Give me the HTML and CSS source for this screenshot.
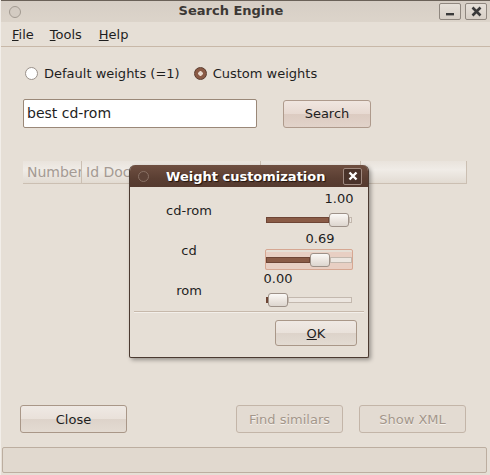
FILE: index.html
```html
<!DOCTYPE html>
<html>
<head>
<meta charset="utf-8">
<link rel="stylesheet" href="styles.css">
</head>
<body>
<div class="window">
  <div class="titlebar">
    <span class="tb-circle"></span>
    <span class="tb-title">Search Engine</span>
    <div class="tb-buttons">
      <span class="tb-btn"><svg width="10" height="10" viewBox="0 0 10 10"><rect x="1" y="6" width="8" height="2.4" fill="#3a3a3a"/></svg></span>
      <span class="tb-btn"><svg width="11" height="11" viewBox="0 0 11 11"><path d="M1.5 1.5 L9.5 9.5 M9.5 1.5 L1.5 9.5" stroke="#3a3a3a" stroke-width="2.6"/></svg></span>
    </div>
  </div>
  <div class="menubar">
    <span class="menu-item"><u>F</u>ile</span>
    <span class="menu-item"><u>T</u>ools</span>
    <span class="menu-item"><u>H</u>elp</span>
  </div>
  <div class="content">
    <div class="radios">
      <label class="radio"><span class="radio-dot"></span>Default weights (=1)</label>
      <label class="radio"><span class="radio-dot checked"></span>Custom weights</label>
    </div>
    <div class="search-row">
      <div class="entry">best cd-rom</div>
      <button class="btn search-btn">Search</button>
    </div>
    <div class="table-header">
      <span class="col col-num">Number</span>
      <span class="col col-id">Id Document</span>
      <span class="col col-w"></span>
      <span class="col col-rest"></span>
    </div>
    <div class="spacer"></div>
    <div class="bottom-buttons">
      <button class="btn close-btn">Close</button>
      <div class="right-buttons">
        <button class="btn disabled">Find similars</button>
        <button class="btn disabled">Show XML</button>
      </div>
    </div>
  </div>
  <div class="statusbar"></div>

  <div class="dialog">
    <div class="dlg-title">
      <span class="dlg-circle"></span>
      <span class="dlg-title-text">Weight customization</span>
      <span class="dlg-close"><svg width="10" height="10" viewBox="0 0 10 10"><path d="M1.5 1.5 L8.5 8.5 M8.5 1.5 L1.5 8.5" stroke="#ffffff" stroke-width="2.4"/></svg></span>
    </div>
    <div class="dlg-body">
      <div class="weight-row">
        <div class="w-label">cd-rom</div>
        <div class="slider">
          <div class="slider-fill" style="width:63px"></div>
          <div class="handle-col"><span class="value">1.00</span><span class="handle"></span></div>
          <div class="slider-rest"></div>
        </div>
      </div>
      <div class="weight-row">
        <div class="w-label">cd</div>
        <div class="slider focused">
          <div class="slider-fill" style="width:44px"></div>
          <div class="handle-col"><span class="value">0.69</span><span class="handle"></span></div>
          <div class="slider-rest"></div>
        </div>
      </div>
      <div class="weight-row">
        <div class="w-label">rom</div>
        <div class="slider">
          <div class="slider-fill" style="width:1px"></div>
          <div class="handle-col"><span class="value">0.00</span><span class="handle"></span></div>
          <div class="slider-rest"></div>
        </div>
      </div>
      <div class="separator"></div>
      <div class="dlg-actions">
        <button class="btn ok-btn"><u>O</u>K</button>
      </div>
    </div>
  </div>
</div>
</body>
</html>
```

FILE: styles.css
```css
* { box-sizing: border-box; }
html, body { margin: 0; padding: 0; }
body {
  width: 490px;
  height: 475px;
  overflow: hidden;
  font-family: "DejaVu Sans", "Liberation Sans", sans-serif;
  font-size: 13px;
  color: #1e1e1e;
  background: #e6dfd6;
}
.window {
  position: relative;
  width: 490px;
  height: 475px;
  display: flex;
  flex-direction: column;
  background: #e6dfd6;
  border-left: 1px solid #f2eee9;
}
.titlebar {
  height: 22px;
  flex: none;
  display: flex;
  align-items: center;
  position: relative;
  border-top: 1px solid #6a6158;
  background: linear-gradient(#d6cec5, #dcd4ca);
  padding: 0 3px 0 8px;
}
.tb-circle {
  width: 12px;
  height: 12px;
  border-radius: 50%;
  border: 1px solid #a29a91;
  background: #d3cbc2;
}
.tb-title {
  flex: 1;
  text-align: center;
  font-weight: bold;
  color: #3c3835;
  font-size: 13px;
  padding-left: 2px;
  margin-top: -2px;
}
.tb-buttons { display: flex; gap: 4px; }
.tb-btn {
  width: 22px;
  height: 17px;
  border: 1px solid #8f877f;
  border-radius: 2px;
  background: linear-gradient(#e6e0d9, #d7cfc6);
  display: flex;
  align-items: center;
  justify-content: center;
}
.menubar {
  height: 25px;
  flex: none;
  display: flex;
  align-items: center;
  padding-left: 11px;
  border-bottom: 1px solid #c8b8a8;
  background: #e6dfd6;
}
.menu-item { margin-right: 16px; }
.menu-item:nth-child(2) { margin-right: 17px; }
.content {
  flex: 1;
  display: flex;
  flex-direction: column;
  padding: 17px 24px 12px 18px;
}
.radios {
  display: flex;
  align-items: center;
  gap: 14px;
  height: 18px;
  padding-left: 6px;
}
.radio { display: flex; align-items: center; gap: 6px; }
.radio-dot {
  width: 13px;
  height: 13px;
  border-radius: 50%;
  border: 1px solid #9a918a;
  background: #ffffff;
}
.radio-dot.checked {
  border-color: #5a3b2d;
  background: radial-gradient(circle, #e8d8cc 0 2px, #8a5a45 2.5px);
}
.search-row {
  display: flex;
  align-items: center;
  margin-top: 17px;
  gap: 26px;
  padding-left: 4px;
}
.entry {
  width: 234px;
  height: 29px;
  background: #ffffff;
  border: 1px solid #9a8878;
  border-radius: 2px;
  padding: 5px 3px;
  font-size: 14px;
}
.btn {
  font-family: "DejaVu Sans", "Liberation Sans", sans-serif;
  font-size: 13px;
  color: #1e1e1e;
  border: 1px solid #a99788;
  border-radius: 3px;
  background: linear-gradient(#efe9e4 0%, #e9e1da 50%, #ddd3ca 52%, #e3dbd2 100%);
  padding: 0;
}
.search-btn {
  width: 88px;
  height: 28px;
  background: linear-gradient(#f0e6e0 0%, #e7d9d1 50%, #dccbc1 52%, #e2d3ca 100%);
  border-color: #ae9a8c;
}
.table-header {
  margin-top: 33px;
  display: flex;
  height: 23px;
  margin-left: 4px;
  margin-right: -1px;
  background: linear-gradient(#e9e3dc, #f0ece7 40%, #e2dbd2);
  border-bottom: 1px solid #cbbfb2;
  border-right: 1px solid #cbbfb2;
  color: #a49a93;
  font-size: 14px;
}
.col {
  display: flex;
  align-items: center;
  padding-left: 4px;
  border-right: 1px solid #cbbfb2;
  white-space: nowrap;
  overflow: hidden;
}
.col-num { width: 59px; }
.col-id { width: 179px; }
.col-w { width: 100px; }
.col-rest { flex: 1; border-right: none; }
.spacer { flex: 1; }
.bottom-buttons {
  display: flex;
  justify-content: space-between;
  align-items: center;
  padding-left: 1px;
  margin-bottom: 2px;
}
.bottom-buttons .btn { width: 107px; height: 28px; }
.right-buttons { display: flex; gap: 16px; }
.btn.disabled {
  color: #a3968a;
  text-shadow: 0 1px 0 #f6f2ee;
  background: #e3dbd2;
  border-color: #c3b5a8;
}
.statusbar {
  flex: none;
  height: 26px;
  margin: 0 3px 2px 1px;
  border: 1px solid #bcaea0;
  border-radius: 2px;
  background: #e1d9cf;
}

/* dialog (floating window) */
.dialog {
  position: absolute;
  left: 128px;
  top: 165px;
  width: 240px;
  height: 193px;
  border: 1px solid #4b3a31;
  border-top: none;
  border-radius: 6px 6px 2px 2px;
  background: #e6dfd6;
  box-shadow: 2px 2px 4px rgba(0,0,0,0.35);
  display: flex;
  flex-direction: column;
  overflow: hidden;
}
.dlg-title {
  height: 22px;
  flex: none;
  display: flex;
  align-items: center;
  padding: 0 6px 0 8px;
  background: linear-gradient(#6f4f41, #5b3f33 60%, #553a2f);
}
.dlg-circle {
  width: 11px;
  height: 11px;
  border-radius: 50%;
  border: 1px solid #8a7266;
  background: #5d4237;
}
.dlg-title-text {
  flex: 1;
  color: #ffffff;
  font-weight: bold;
  font-size: 13px;
  padding-left: 17px;
  text-shadow: 1px 1px 1px #1e120c;
}
.dlg-close {
  width: 19px;
  height: 17px;
  border: 1px solid #a08a80;
  border-radius: 2px;
  background: #4a332a;
  display: flex;
  align-items: center;
  justify-content: center;
}
.dlg-body {
  flex: 1;
  display: flex;
  flex-direction: column;
  padding-top: 4px;
}
.weight-row {
  display: grid;
  grid-template-columns: 118px 88px;
  column-gap: 17px;
  height: 40px;
  align-items: stretch;
}
.w-label {
  display: flex;
  align-items: center;
  justify-content: center;
  padding-bottom: 1px;
}
.slider {
  display: flex;
  align-items: flex-end;
  padding: 0 1px 0 1px;
  height: 39px;
  position: relative;
}
.slider.focused {
  background: linear-gradient(transparent 0 21px, #e8cfc3 21px);
}
.slider.focused::after {
  content: "";
  position: absolute;
  left: 0; right: 0; bottom: 0;
  height: 19px;
  border: 1px solid #d6a792;
  border-radius: 2px;
}
.slider-fill {
  flex: none;
  height: 6px;
  margin-bottom: 7px;
  background: #8a5b46;
  border: 1px solid #6e4535;
}
.handle-col {
  flex: none;
  width: 20px;
  display: flex;
  flex-direction: column;
  align-items: center;
  z-index: 1;
}
.value {
  white-space: nowrap;
  height: 16px;
  margin-bottom: 6px;
  line-height: 16px;
}
.handle {
  width: 20px;
  height: 14px;
  margin-bottom: 3px;
  border: 1px solid #9d9188;
  border-radius: 3px;
  background: linear-gradient(#fbf9f7, #ebe5df 55%, #ddd6cf);
}
.slider-rest {
  flex: 1;
  height: 6px;
  margin-bottom: 7px;
  border: 1px solid #c3b8ae;
  background: #ece6e0;
}
.separator {
  margin: 0 4px 0 4px;
  border-top: 1px solid #c7b9ab;
  border-bottom: 1px solid #f3efea;
}
.dlg-actions {
  display: flex;
  justify-content: flex-end;
  padding: 7px 11px 0 0;
}
.ok-btn {
  width: 82px;
  height: 26px;
}
```
